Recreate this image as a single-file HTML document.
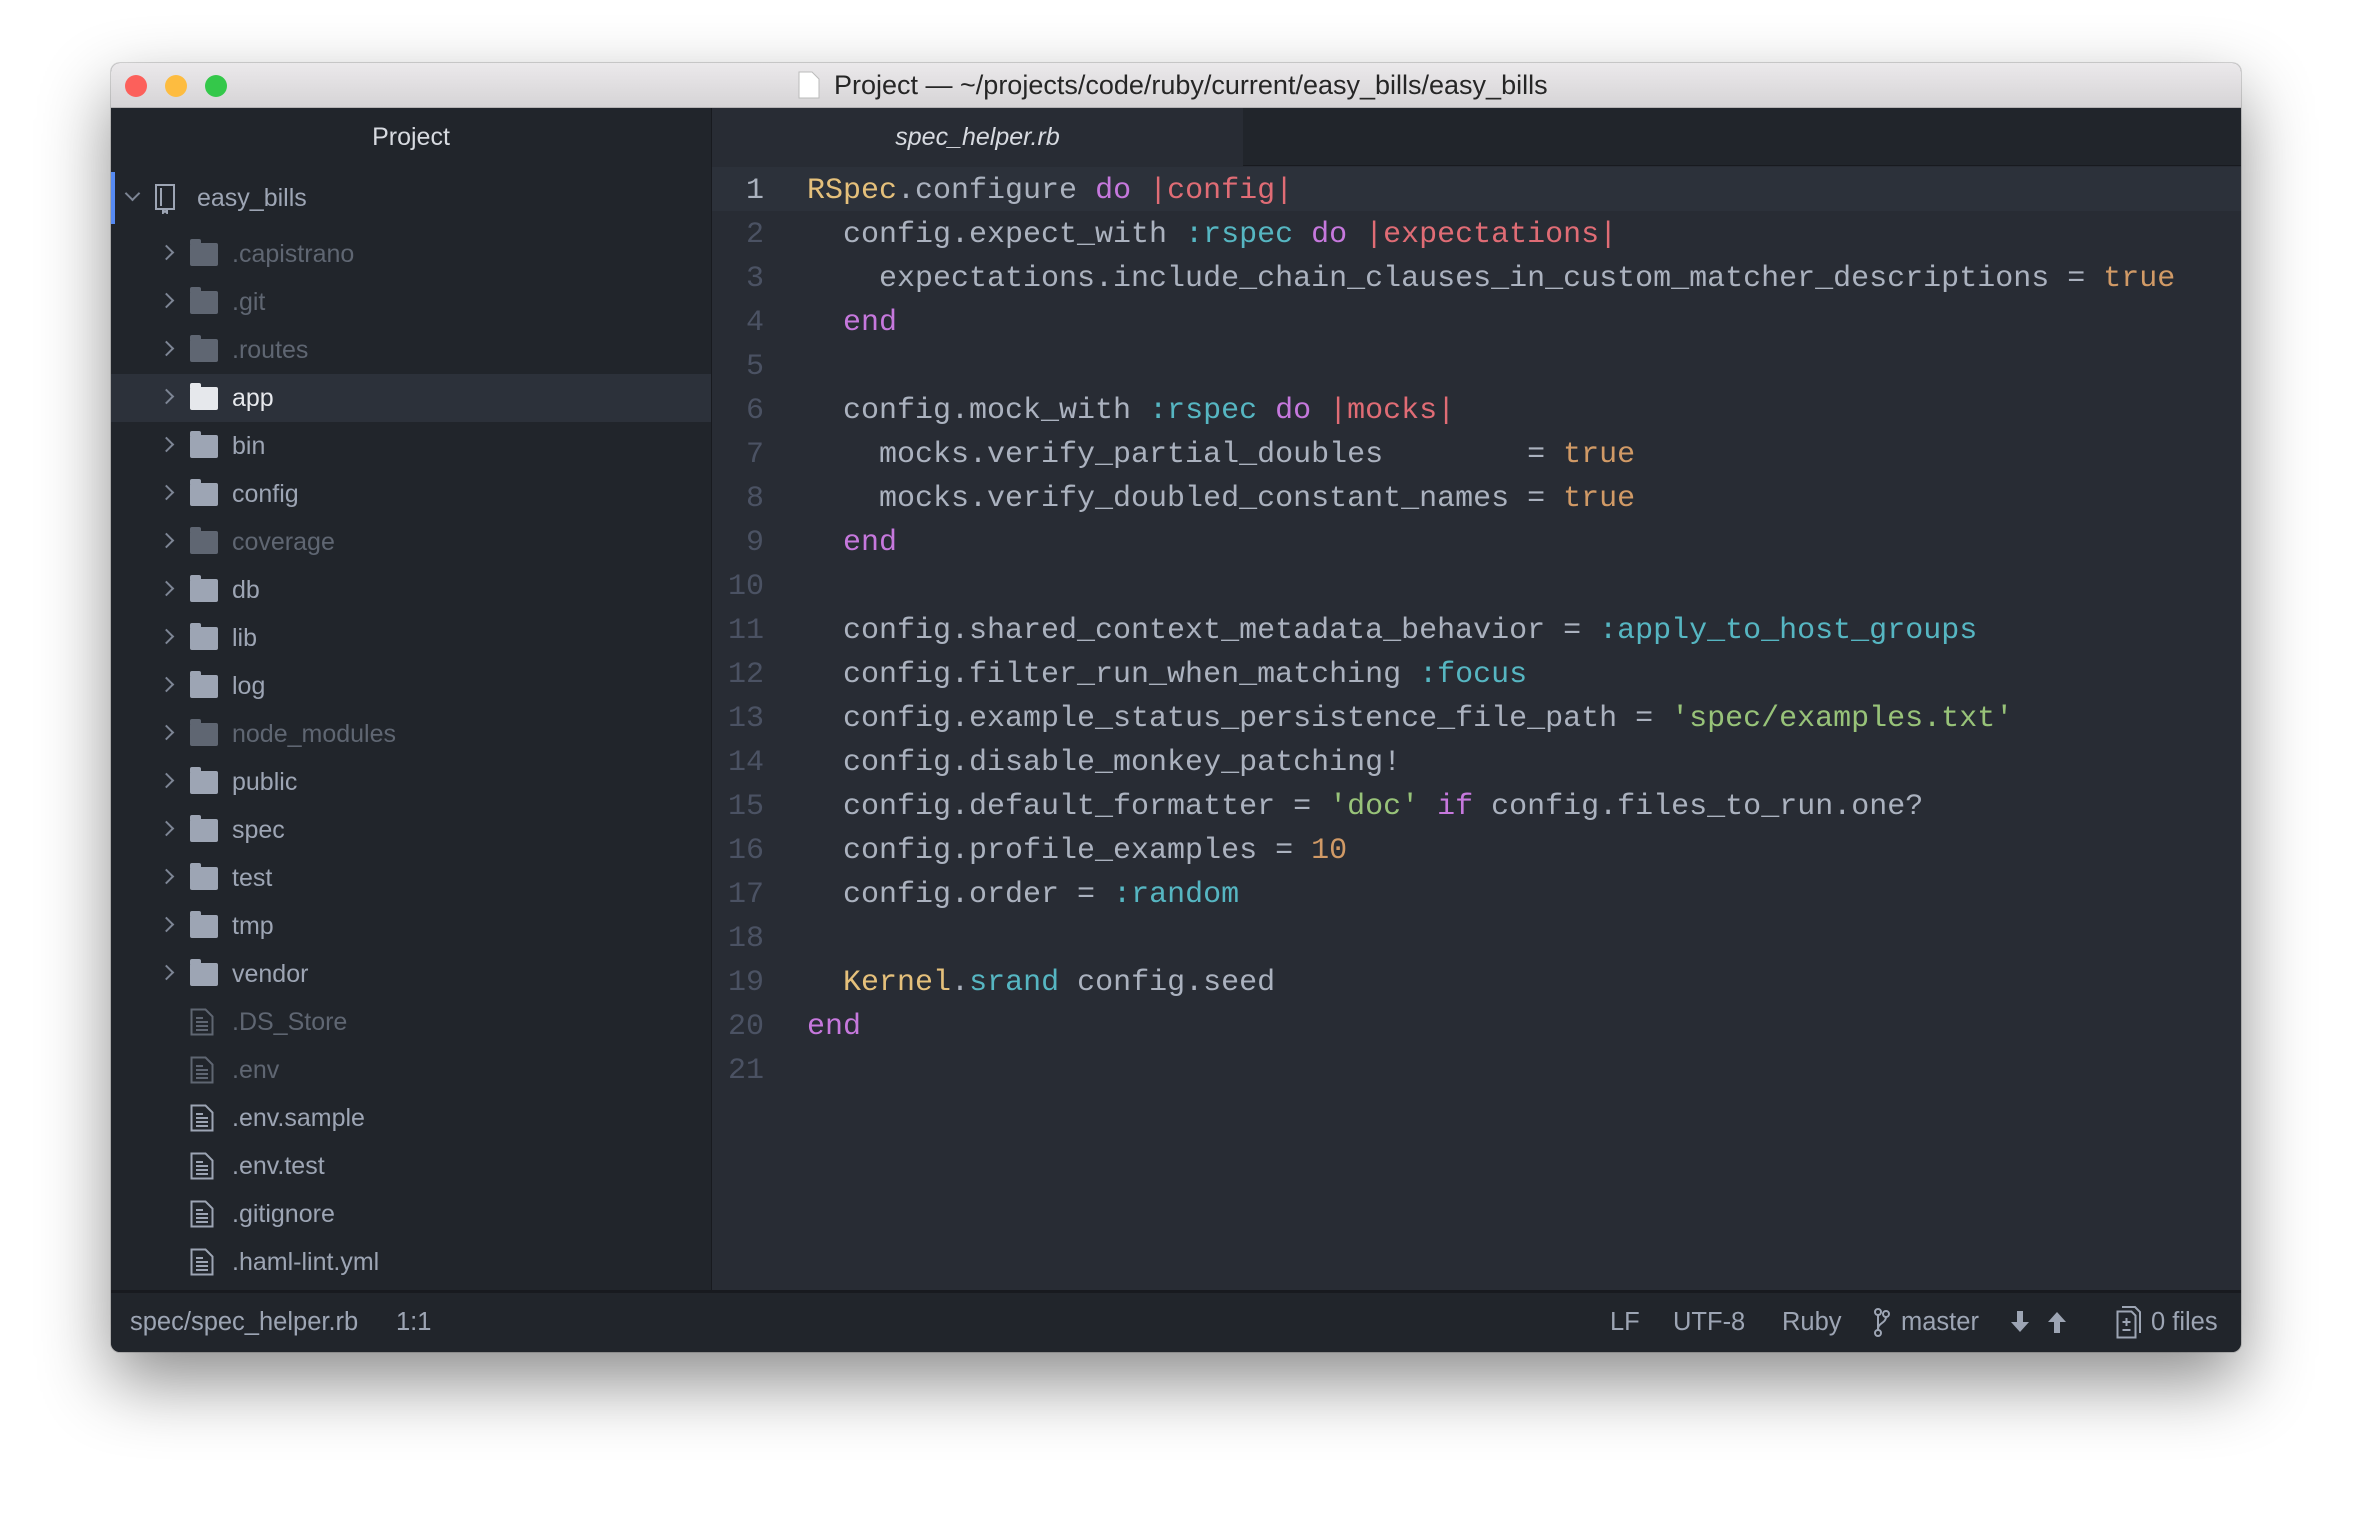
<!DOCTYPE html>
<html><head><meta charset="utf-8"><style>
*{margin:0;padding:0;box-sizing:border-box}
body{width:2354px;height:1514px;background:#fff;position:relative;overflow:hidden;font-family:"Liberation Sans",sans-serif}
.win{position:absolute;left:111px;top:63px;width:2130px;height:1289px;border-radius:9px;overflow:hidden;background:#21252b;box-shadow:0 30px 70px rgba(0,0,0,.45),0 0 0 1px rgba(0,0,0,.15)}
.title{position:absolute;left:0;top:0;width:100%;height:45px;background:linear-gradient(#ebe9eb,#d6d4d6);border-bottom:1px solid #b5b3b5}
.dot{position:absolute;top:12px;width:22px;height:22px;border-radius:50%}
.ttext{position:absolute;left:723px;top:7px;font-size:27px;color:#262626;white-space:nowrap}
.side{position:absolute;left:0;top:45px;width:601px;height:1182px;background:#21252b;border-right:1px solid #181a1f}
.shead{position:absolute;top:0;width:100%;height:58px;text-align:center;line-height:58px;color:#d7dae0;font-size:25px}
.row{position:absolute;left:0;width:600px;height:48px;font-size:25px;line-height:48px;color:#9da5b4}
.row.dim{color:#5f6672}
.row.sel{background:#2c313a;color:#e6e8ec}
.chev{position:absolute;left:50px;top:17px;width:11px;height:11px;border-right:2.5px solid #7d8594;border-top:2.5px solid #7d8594;transform:rotate(45deg)}
.fold{position:absolute;left:79px;top:13px;width:28px;height:23px;background:#9da5b4;border-radius:2px}
.fold:before{content:"";position:absolute;left:0;top:-4px;width:11px;height:5px;background:inherit;border-radius:2px 2px 0 0}
.dim .fold{background:#5f6672}.sel .fold{background:#e6e8ec}
.nm{position:absolute;left:121px}
.file{position:absolute;left:79px;top:10px}
.editor{position:absolute;left:601px;top:45px;width:1529px;height:1182px;background:#282c34}
.tabs{position:absolute;left:0;top:0;width:100%;height:58px;background:#21252b;border-bottom:1px solid #181a1f}
.tab{position:absolute;left:0;top:0;width:531px;height:59px;background:#282c34;text-align:center;line-height:58px;font-style:italic;color:#d7dae0;font-size:25px}
.code{position:absolute;left:0;top:59px;width:100%;font-family:"Liberation Mono",monospace;font-size:30px}
.ln{position:absolute;left:0;width:100%;height:44px;line-height:48px;white-space:pre;color:#abb2bf}
.ln.cur{background:#2c313a}
.num{position:absolute;right:1477px;color:#4b5263;text-align:right}
.cur .num{color:#abb2bf}
.tx{position:absolute;left:95px}
.y{color:#e5c07b}.k{color:#c678dd}.r{color:#e06c75}.c{color:#56b6c2}.o{color:#d19a66}.g{color:#98c379}
.status{position:absolute;left:0;top:1227px;width:100%;height:62px;background:#21252b;border-top:3px solid #181a1f;color:#9da5b4;font-size:25.5px}
.st{position:absolute;top:15px;white-space:nowrap}
</style></head><body>
<div class="win">
 <div class="title">
  <div class="dot" style="left:14px;background:#fc605b"></div>
  <div class="dot" style="left:54px;background:#fdbc40"></div>
  <div class="dot" style="left:94px;background:#34c84a"></div>
  <svg style="position:absolute;left:687px;top:8px" width="22" height="28" viewBox="0 0 22 28"><path d="M1 1h13l7 7v19H1z" fill="#fff" stroke="#bbb"/></svg>
  <div class="ttext">Project — ~/projects/code/ruby/current/easy_bills/easy_bills</div>
 </div>
 <div class="side">
  <div class="shead">Project</div>
  <div class="row" style="top:64px;height:52px;line-height:52px;color:#9da5b4"><div style="position:absolute;left:0;top:0;width:4px;height:52px;background:#568af2"></div>
   <div style="position:absolute;left:16px;top:16px;width:11px;height:11px;border-right:2.5px solid #7d8594;border-bottom:2.5px solid #7d8594;transform:rotate(45deg)"></div>
   <svg style="position:absolute;left:43px;top:12px" width="22" height="30" viewBox="0 0 22 30"><rect x="2" y="1" width="18" height="24" fill="none" stroke="#9da5b4" stroke-width="2"/><path d="M7 4v18M9 25v4l2-2 2 2v-4" stroke="#9da5b4" stroke-width="2" fill="none"/></svg>
   <span style="position:absolute;left:86px">easy_bills</span></div>
  <div class="row dim" style="top:122px"><i class="chev"></i><i class="fold"></i><span class="nm">.capistrano</span></div>
  <div class="row dim" style="top:170px"><i class="chev"></i><i class="fold"></i><span class="nm">.git</span></div>
  <div class="row dim" style="top:218px"><i class="chev"></i><i class="fold"></i><span class="nm">.routes</span></div>
  <div class="row sel" style="top:266px"><i class="chev"></i><i class="fold"></i><span class="nm">app</span></div>
  <div class="row" style="top:314px"><i class="chev"></i><i class="fold"></i><span class="nm">bin</span></div>
  <div class="row" style="top:362px"><i class="chev"></i><i class="fold"></i><span class="nm">config</span></div>
  <div class="row dim" style="top:410px"><i class="chev"></i><i class="fold"></i><span class="nm">coverage</span></div>
  <div class="row" style="top:458px"><i class="chev"></i><i class="fold"></i><span class="nm">db</span></div>
  <div class="row" style="top:506px"><i class="chev"></i><i class="fold"></i><span class="nm">lib</span></div>
  <div class="row" style="top:554px"><i class="chev"></i><i class="fold"></i><span class="nm">log</span></div>
  <div class="row dim" style="top:602px"><i class="chev"></i><i class="fold"></i><span class="nm">node_modules</span></div>
  <div class="row" style="top:650px"><i class="chev"></i><i class="fold"></i><span class="nm">public</span></div>
  <div class="row" style="top:698px"><i class="chev"></i><i class="fold"></i><span class="nm">spec</span></div>
  <div class="row" style="top:746px"><i class="chev"></i><i class="fold"></i><span class="nm">test</span></div>
  <div class="row" style="top:794px"><i class="chev"></i><i class="fold"></i><span class="nm">tmp</span></div>
  <div class="row" style="top:842px"><i class="chev"></i><i class="fold"></i><span class="nm">vendor</span></div>
  <div class="row dim" style="top:890px"><svg class="file" width="24" height="28" viewBox="0 0 24 28"><path d="M1.5 1.5h14l7 7v18h-21z" fill="none" stroke="currentColor" stroke-width="2"/><path d="M6 10h7M6 14h12M6 18h12M6 22h12" stroke="currentColor" stroke-width="2"/></svg><span class="nm">.DS_Store</span></div>
  <div class="row dim" style="top:938px"><svg class="file" width="24" height="28" viewBox="0 0 24 28"><path d="M1.5 1.5h14l7 7v18h-21z" fill="none" stroke="currentColor" stroke-width="2"/><path d="M6 10h7M6 14h12M6 18h12M6 22h12" stroke="currentColor" stroke-width="2"/></svg><span class="nm">.env</span></div>
  <div class="row" style="top:986px"><svg class="file" width="24" height="28" viewBox="0 0 24 28"><path d="M1.5 1.5h14l7 7v18h-21z" fill="none" stroke="currentColor" stroke-width="2"/><path d="M6 10h7M6 14h12M6 18h12M6 22h12" stroke="currentColor" stroke-width="2"/></svg><span class="nm">.env.sample</span></div>
  <div class="row" style="top:1034px"><svg class="file" width="24" height="28" viewBox="0 0 24 28"><path d="M1.5 1.5h14l7 7v18h-21z" fill="none" stroke="currentColor" stroke-width="2"/><path d="M6 10h7M6 14h12M6 18h12M6 22h12" stroke="currentColor" stroke-width="2"/></svg><span class="nm">.env.test</span></div>
  <div class="row" style="top:1082px"><svg class="file" width="24" height="28" viewBox="0 0 24 28"><path d="M1.5 1.5h14l7 7v18h-21z" fill="none" stroke="currentColor" stroke-width="2"/><path d="M6 10h7M6 14h12M6 18h12M6 22h12" stroke="currentColor" stroke-width="2"/></svg><span class="nm">.gitignore</span></div>
  <div class="row" style="top:1130px"><svg class="file" width="24" height="28" viewBox="0 0 24 28"><path d="M1.5 1.5h14l7 7v18h-21z" fill="none" stroke="currentColor" stroke-width="2"/><path d="M6 10h7M6 14h12M6 18h12M6 22h12" stroke="currentColor" stroke-width="2"/></svg><span class="nm">.haml-lint.yml</span></div>
 </div>
 <div class="editor">
  <div class="tabs"><div class="tab">spec_helper.rb</div></div>
  <div class="code">
   <div class="ln cur" style="top:0"><span class="num">1</span><span class="tx"><span class="y">RSpec</span>.configure <span class="k">do</span> <span class="r">|config|</span></span></div>
   <div class="ln" style="top:44px"><span class="num">2</span><span class="tx">  config.expect_with <span class="c">:rspec</span> <span class="k">do</span> <span class="r">|expectations|</span></span></div>
   <div class="ln" style="top:88px"><span class="num">3</span><span class="tx">    expectations.include_chain_clauses_in_custom_matcher_descriptions = <span class="o">true</span></span></div>
   <div class="ln" style="top:132px"><span class="num">4</span><span class="tx">  <span class="k">end</span></span></div>
   <div class="ln" style="top:176px"><span class="num">5</span></div>
   <div class="ln" style="top:220px"><span class="num">6</span><span class="tx">  config.mock_with <span class="c">:rspec</span> <span class="k">do</span> <span class="r">|mocks|</span></span></div>
   <div class="ln" style="top:264px"><span class="num">7</span><span class="tx">    mocks.verify_partial_doubles        = <span class="o">true</span></span></div>
   <div class="ln" style="top:308px"><span class="num">8</span><span class="tx">    mocks.verify_doubled_constant_names = <span class="o">true</span></span></div>
   <div class="ln" style="top:352px"><span class="num">9</span><span class="tx">  <span class="k">end</span></span></div>
   <div class="ln" style="top:396px"><span class="num">10</span></div>
   <div class="ln" style="top:440px"><span class="num">11</span><span class="tx">  config.shared_context_metadata_behavior = <span class="c">:apply_to_host_groups</span></span></div>
   <div class="ln" style="top:484px"><span class="num">12</span><span class="tx">  config.filter_run_when_matching <span class="c">:focus</span></span></div>
   <div class="ln" style="top:528px"><span class="num">13</span><span class="tx">  config.example_status_persistence_file_path = <span class="g">'spec/examples.txt'</span></span></div>
   <div class="ln" style="top:572px"><span class="num">14</span><span class="tx">  config.disable_monkey_patching!</span></div>
   <div class="ln" style="top:616px"><span class="num">15</span><span class="tx">  config.default_formatter = <span class="g">'doc'</span> <span class="k">if</span> config.files_to_run.one?</span></div>
   <div class="ln" style="top:660px"><span class="num">16</span><span class="tx">  config.profile_examples = <span class="o">10</span></span></div>
   <div class="ln" style="top:704px"><span class="num">17</span><span class="tx">  config.order = <span class="c">:random</span></span></div>
   <div class="ln" style="top:748px"><span class="num">18</span></div>
   <div class="ln" style="top:792px"><span class="num">19</span><span class="tx">  <span class="y">Kernel</span>.<span class="c">srand</span> config.seed</span></div>
   <div class="ln" style="top:836px"><span class="num">20</span><span class="tx"><span class="k">end</span></span></div>
   <div class="ln" style="top:880px"><span class="num">21</span></div>
  </div>
 </div>
 <div class="status">
  <span class="st" style="left:19px">spec/spec_helper.rb</span>
  <span class="st" style="left:285px">1:1</span>
  <span class="st" style="left:1499px">LF</span>
  <span class="st" style="left:1562px">UTF-8</span>
  <span class="st" style="left:1671px">Ruby</span>
  <svg style="position:absolute;left:1763px;top:15px" width="16" height="30" viewBox="0 0 16 30"><circle cx="4" cy="4" r="3" fill="none" stroke="#9da5b4" stroke-width="2"/><circle cx="4" cy="25" r="3" fill="none" stroke="#9da5b4" stroke-width="2"/><circle cx="12" cy="6" r="3" fill="none" stroke="#9da5b4" stroke-width="2"/><path d="M4 7v15M12 9c0 6-8 6-8 12" stroke="#9da5b4" stroke-width="2" fill="none"/></svg>
  <span class="st" style="left:1790px">master</span>
  <svg style="position:absolute;left:1900px;top:18px" width="18" height="22" viewBox="0 0 18 22"><path d="M6 0h6v11h6l-9 10-9-10h6z" fill="#9da5b4"/></svg>
  <svg style="position:absolute;left:1937px;top:18px" width="18" height="22" viewBox="0 0 18 22"><path d="M6 22h6V11h6L9 1 0 11h6z" fill="#9da5b4"/></svg>
  <svg style="position:absolute;left:2005px;top:12px" width="26" height="34" viewBox="0 0 26 34"><path d="M1.5 6.5h14l4 4v22h-18z" fill="none" stroke="#9da5b4" stroke-width="2"/><path d="M6 2h13l5 5v21" fill="none" stroke="#9da5b4" stroke-width="2"/><path d="M10.5 13v8M6.5 17h8M6.5 25h8" stroke="#9da5b4" stroke-width="2"/></svg>
  <span class="st" style="left:2040px">0 files</span>
 </div>
</div>
</body></html>
